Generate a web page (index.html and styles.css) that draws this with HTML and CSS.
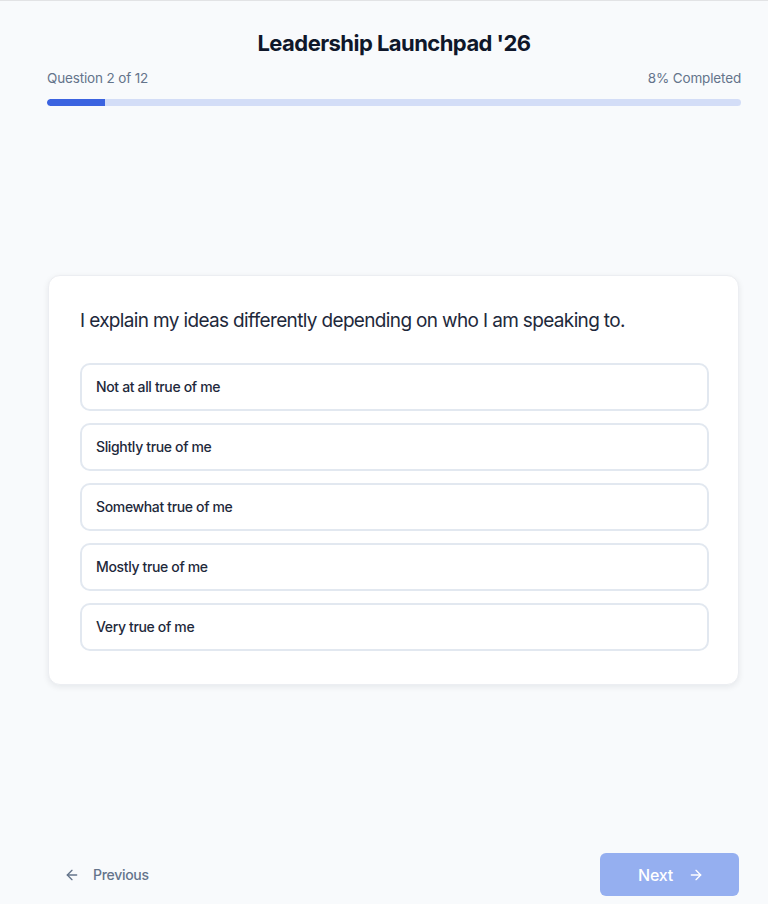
FILE: index.html
```html
<!DOCTYPE html>
<html lang="en">
<head>
  <meta charset="UTF-8" />
  <meta name="viewport" content="width=device-width, initial-scale=1.0"/>
  <title>Leadership Launchpad '26</title>
  <link rel="stylesheet" href="styles.css">
</head>
<body>
  <div class="page">
    <header class="header">
      <h1>Leadership Launchpad '26</h1>
      <div class="progress-info">
        <span>Question 2 of 12</span>
        <span>8% Completed</span>
      </div>
      <div class="progress-bar">
        <div class="progress-fill" style="width: 8.4%"></div>
      </div>
    </header>

    <main class="main">
      <div class="card">
        <h2 class="question">I explain my ideas differently depending on who I am speaking to.</h2>
        <div class="options">
          <button class="option">Not at all true of me</button>
          <button class="option">Slightly true of me</button>
          <button class="option">Somewhat true of me</button>
          <button class="option">Mostly true of me</button>
          <button class="option">Very true of me</button>
        </div>
      </div>
    </main>

    <footer class="footer">
      <button class="btn-prev">
        <svg width="16" height="16" viewBox="0 0 24 24" fill="none" stroke="currentColor" stroke-width="2" stroke-linecap="round" stroke-linejoin="round"><path d="M19 12H5"/><path d="M12 19l-7-7 7-7"/></svg>
        Previous
      </button>
      <button class="btn-next" disabled>
        Next
        <svg width="16" height="16" viewBox="0 0 24 24" fill="none" stroke="currentColor" stroke-width="2" stroke-linecap="round" stroke-linejoin="round"><path d="M5 12h14"/><path d="M12 5l7 7-7 7"/></svg>
      </button>
    </footer>
  </div>
</body>
</html>
```

FILE: styles.css
```css
body {
  font-family: Inter, "Noto Sans", sans-serif;
  background: #f8fafc;
  margin: 0;
  border-top: 1px solid #e2e3e5;
  color: #0f172a;
}
.page {
  min-height: calc(100vh - 1px);
  box-sizing: border-box;
  display: flex;
  flex-direction: column;
  padding: 0 27px 8px 47px;
}
.header {
  padding-top: 28px;
}
.header h1 {
  margin: 0;
  text-align: center;
  font-size: 22px;
  line-height: 28px;
  font-weight: 700;
  letter-spacing: -0.55px;
  color: #0f172a;
}
.progress-info {
  display: flex;
  justify-content: space-between;
  margin-top: 11px;
  font-size: 13.5px;
  line-height: 20px;
  letter-spacing: -0.15px;
  color: #64748b;
}
.progress-bar {
  margin-top: 11px;
  height: 7px;
  border-radius: 4px;
  background: #d3ddf7;
  overflow: hidden;
}
.progress-fill {
  height: 100%;
  background: #3b63e0;
  border-radius: 4px 0 0 4px;
}
.main {
  flex: 1;
  display: flex;
  flex-direction: column;
  justify-content: center;
  margin: 0 2px 0 1px;
}
.card {
  background: #fff;
  border: 1px solid #eceef2;
  border-radius: 12px;
  box-shadow: 0 2px 6px rgba(15, 23, 42, 0.08);
  padding: 31px 29px 33px 31px;
}
.question {
  margin: 0 0 28px;
  font-size: 19px;
  line-height: 28px;
  font-weight: 400;
  letter-spacing: -0.65px;
  color: #1e293b;
}
.options {
  display: flex;
  flex-direction: column;
  gap: 12px;
}
.option {
  font-family: inherit;
  text-align: left;
  height: 48px;
  padding: 0 14px;
  background: #fff;
  border: 2px solid #e2e8f0;
  border-radius: 10px;
  font-size: 14px;
  font-weight: 500;
  letter-spacing: -0.35px;
  color: #1e293b;
  cursor: pointer;
}
.footer {
  display: flex;
  justify-content: space-between;
  align-items: center;
  margin: 0 2px 0 1px;
}
.btn-prev {
  display: flex;
  align-items: center;
  gap: 13px;
  font-family: inherit;
  background: none;
  border: none;
  padding: 0 16px;
  height: 43px;
  font-size: 14px;
  font-weight: 500;
  letter-spacing: -0.3px;
  color: #64748b;
  cursor: pointer;
}
.btn-next {
  display: flex;
  align-items: center;
  gap: 15px;
  font-family: inherit;
  height: 43px;
  width: 139px;
  padding: 0 0 0 38px;
  border: none;
  border-radius: 6px;
  background: #95aff0;
  color: #fff;
  font-size: 16px;
  font-weight: 500;
  letter-spacing: -0.2px;
}
```
